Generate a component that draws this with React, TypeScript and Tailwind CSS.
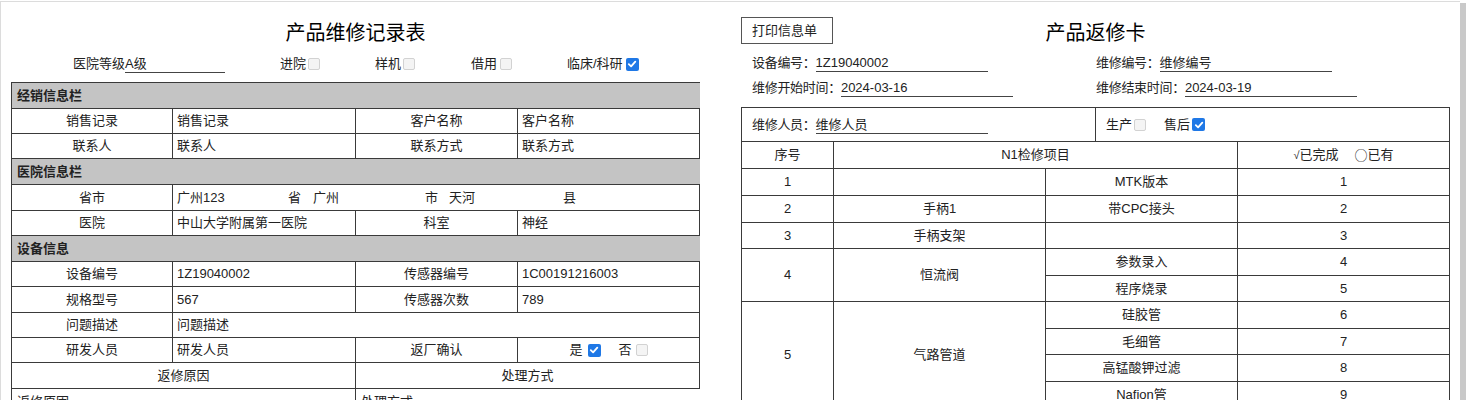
import React from "react";

const B = "border-[#3a3a3a]";

function Cb({ checked }: { checked?: boolean }) {
  if (checked) {
    return (
      <span className="inline-flex w-[13px] h-[13px] rounded-[2px] bg-[#1f78e6] items-center justify-center shrink-0">
        <svg width="10" height="10" viewBox="0 0 10 10">
          <path d="M1.8 5.2 L4.1 7.4 L8.3 2.6" stroke="white" strokeWidth="1.8" fill="none" strokeLinecap="round" strokeLinejoin="round" />
        </svg>
      </span>
    );
  }
  return <span className="inline-block w-[12px] h-[12px] rounded-[2px] border border-[#d2d2d2] bg-[#f4f4f4] shrink-0" />;
}

function Cell({ w, children, center, last, bold }: { w: string; children?: React.ReactNode; center?: boolean; last?: boolean; bold?: boolean }) {
  return (
    <div
      className={`${w} h-full flex items-center ${last ? "" : `border-r ${B}`} ${center ? "justify-center" : "pl-[4px]"} ${bold ? "font-bold" : ""}`}
    >
      {children}
    </div>
  );
}

function LRow({ h, children, gray }: { h: string; children: React.ReactNode; gray?: boolean }) {
  return <div className={`flex ${h} border-b ${B} ${gray ? "bg-[#c4c4c4]" : ""}`}>{children}</div>;
}

function Section({ h, title }: { h: string; title: string }) {
  return (
    <LRow h={h} gray>
      <div className="pl-[5px] flex items-center font-bold">{title}</div>
    </LRow>
  );
}

function LeftPanel() {
  return (
    <div className="w-[689px] shrink-0">
      <div className="h-[44px] pt-[18px] text-center text-[20px] leading-[26px] font-['Liberation_Serif','Noto_Sans_CJK_SC',serif] font-normal text-[#000]">
        产品维修记录表
      </div>
      <div className="h-[36px] flex items-center">
        <div className="ml-[62px] w-[207px] flex items-center">
          <span className="leading-[18px]">医院等级</span>
          <span className={`w-[100px] leading-[17px] border-b border-[#444]`}>A级</span>
        </div>
        <div className="w-[95px] flex items-center gap-[2px]">
          <span>进院</span>
          <Cb />
        </div>
        <div className="w-[96px] flex items-center gap-[2px]">
          <span>样机</span>
          <Cb />
        </div>
        <div className="w-[96px] flex items-center gap-[3px]">
          <span>借用</span>
          <Cb />
        </div>
        <div className="flex items-center gap-[3px]">
          <span>临床/科研</span>
          <Cb checked />
        </div>
      </div>
      <div className={`border-l border-t ${B} w-[689px]`}>
        <Section h="h-[26px]" title="经销信息栏" />
        <LRow h="h-[25px]">
          <Cell w="w-[161px]" center>销售记录</Cell>
          <Cell w="w-[183px]">销售记录</Cell>
          <Cell w="w-[162px]" center>客户名称</Cell>
          <Cell w="w-[182px]">客户名称</Cell>
        </LRow>
        <LRow h="h-[25px]">
          <Cell w="w-[161px]" center>联系人</Cell>
          <Cell w="w-[183px]">联系人</Cell>
          <Cell w="w-[162px]" center>联系方式</Cell>
          <Cell w="w-[182px]">联系方式</Cell>
        </LRow>
        <Section h="h-[26px]" title="医院信息栏" />
        <LRow h="h-[26px]">
          <Cell w="w-[161px]" center>省市</Cell>
          <Cell w="w-[527px]">
            <span className="w-[111px]">广州123</span>
            <span className="w-[25px]">省</span>
            <span className="w-[112px]">广州</span>
            <span className="w-[24px]">市</span>
            <span className="w-[114px]">天河</span>
            <span>县</span>
          </Cell>
        </LRow>
        <LRow h="h-[25px]">
          <Cell w="w-[161px]" center>医院</Cell>
          <Cell w="w-[183px]">中山大学附属第一医院</Cell>
          <Cell w="w-[162px]" center>科室</Cell>
          <Cell w="w-[182px]">神经</Cell>
        </LRow>
        <Section h="h-[26px]" title="设备信息" />
        <LRow h="h-[25px]">
          <Cell w="w-[161px]" center>设备编号</Cell>
          <Cell w="w-[183px]">1Z19040002</Cell>
          <Cell w="w-[162px]" center>传感器编号</Cell>
          <Cell w="w-[182px]">1C00191216003</Cell>
        </LRow>
        <LRow h="h-[26px]">
          <Cell w="w-[161px]" center>规格型号</Cell>
          <Cell w="w-[183px]">567</Cell>
          <Cell w="w-[162px]" center>传感器次数</Cell>
          <Cell w="w-[182px]">789</Cell>
        </LRow>
        <LRow h="h-[25px]">
          <Cell w="w-[161px]" center>问题描述</Cell>
          <Cell w="w-[527px]">问题描述</Cell>
        </LRow>
        <LRow h="h-[25px]">
          <Cell w="w-[161px]" center>研发人员</Cell>
          <Cell w="w-[183px]">研发人员</Cell>
          <Cell w="w-[162px]" center>返厂确认</Cell>
          <Cell w="w-[182px]" center>
            <span className="flex items-center gap-[5px]">
              <span>是</span>
              <Cb checked />
            </span>
            <span className="flex items-center gap-[4px] ml-[18px]">
              <span>否</span>
              <Cb />
            </span>
          </Cell>
        </LRow>
        <LRow h="h-[26px]">
          <Cell w="w-[344px]" center>返修原因</Cell>
          <Cell w="w-[344px]" center>处理方式</Cell>
        </LRow>
        <LRow h="h-[26px]">
          <div className={`w-[344px] h-full flex items-center pl-[5px] border-r ${B}`}>返修原因</div>
          <div className="w-[344px] h-full flex items-center pl-[5px]">处理方式</div>
        </LRow>
      </div>
    </div>
  );
}

function UField({ label, value, w }: { label: string; value: string; w: string }) {
  return (
    <div className="flex items-center">
      <span className="leading-[18px] tracking-[-0.3px]">{label}</span>
      <span className={`${w} leading-[17px] border-b border-[#444]`}>{value}</span>
    </div>
  );
}

function RRow({ h, children, last }: { h: string; children: React.ReactNode; last?: boolean }) {
  return <div className={`flex ${h} ${last ? "" : `border-b ${B}`}`}>{children}</div>;
}

function C({ w, children, last }: { w: string; children?: React.ReactNode; last?: boolean }) {
  return <div className={`${w} h-full flex items-center justify-center ${last ? "" : `border-r ${B}`}`}>{children}</div>;
}

function RightPanel() {
  return (
    <div className="w-[709px] shrink-0">
      <div className="grid grid-cols-[1fr_auto_1fr] h-[44px]">
        <div className="pt-[15px]">
          <div className="w-[92px] h-[27px] border border-[#555] flex items-center pl-[10px]">打印信息单</div>
        </div>
        <div className="pt-[18px] text-[20px] leading-[26px] font-['Liberation_Serif','Noto_Sans_CJK_SC',serif] font-normal text-[#000]">
          产品返修卡
        </div>
        <div />
      </div>
      <div className="pl-[11px]">
        <div className="flex h-[20px] mt-[7px] items-center">
          <div className="w-[344px]">
            <UField label="设备编号：" value="1Z19040002" w="w-[172px]" />
          </div>
          <UField label="维修编号：" value="维修编号" w="w-[172px]" />
        </div>
        <div className="flex h-[20px] mt-[5px] items-center">
          <div className="w-[344px]">
            <UField label="维修开始时间：" value="2024-03-16" w="w-[172px]" />
          </div>
          <UField label="维修结束时间：" value="2024-03-19" w="w-[172px]" />
        </div>
      </div>
      <div className={`mt-[9px] border-l border-t border-r ${B} w-[709px]`}>
        <RRow h="h-[34px]">
          <div className={`w-[354px] h-full flex items-center pl-[10px] border-r ${B}`}>
            <UField label="维修人员：" value="维修人员" w="w-[172px]" />
          </div>
          <div className="flex-1 h-full flex items-center pl-[10px]">
            <span>生产</span>
            <span className="ml-[2px] flex"><Cb /></span>
            <span className="ml-[18px]">售后</span>
            <span className="ml-[2px] flex"><Cb checked /></span>
          </div>
        </RRow>
        <RRow h="h-[27px]">
          <C w="w-[92px]">序号</C>
          <C w="w-[404px]">N1检修项目</C>
          <C w="flex-1" last>
            <span className="text-[11px]">√</span>
            <span>已完成</span>
            <span className="ml-[16px] font-['Noto_Sans_CJK_SC',sans-serif]">○</span>
            <span>已有</span>
          </C>
        </RRow>
        <RRow h="h-[27px]">
          <C w="w-[92px]">1</C>
          <C w="w-[212px]"></C>
          <C w="w-[192px]">MTK版本</C>
          <C w="flex-1" last>1</C>
        </RRow>
        <RRow h="h-[27px]">
          <C w="w-[92px]">2</C>
          <C w="w-[212px]">手柄1</C>
          <C w="w-[192px]">带CPC接头</C>
          <C w="flex-1" last>2</C>
        </RRow>
        <RRow h="h-[26px]">
          <C w="w-[92px]">3</C>
          <C w="w-[212px]">手柄支架</C>
          <C w="w-[192px]"></C>
          <C w="flex-1" last>3</C>
        </RRow>
        <div className={`flex border-b ${B}`}>
          <div className={`w-[92px] flex items-center justify-center border-r ${B}`}>4</div>
          <div className={`w-[212px] flex items-center justify-center border-r ${B}`}>恒流阀</div>
          <div className="flex-1 flex flex-col">
            <RRow h="h-[27px]">
              <C w="w-[192px]">参数录入</C>
              <C w="flex-1" last>4</C>
            </RRow>
            <RRow h="h-[25px]" last>
              <C w="w-[192px]">程序烧录</C>
              <C w="flex-1" last>5</C>
            </RRow>
          </div>
        </div>
        <div className={`flex border-b ${B}`}>
          <div className={`w-[92px] flex items-center justify-center border-r ${B}`}>5</div>
          <div className={`w-[212px] flex items-center justify-center border-r ${B}`}>气路管道</div>
          <div className="flex-1 flex flex-col">
            <RRow h="h-[27px]">
              <C w="w-[192px]">硅胶管</C>
              <C w="flex-1" last>6</C>
            </RRow>
            <RRow h="h-[26px]">
              <C w="w-[192px]">毛细管</C>
              <C w="flex-1" last>7</C>
            </RRow>
            <RRow h="h-[27px]">
              <C w="w-[192px]">高锰酸钾过滤</C>
              <C w="flex-1" last>8</C>
            </RRow>
            <RRow h="h-[26px]" last>
              <C w="w-[192px]">Nafion管</C>
              <C w="flex-1" last>9</C>
            </RRow>
          </div>
        </div>
      </div>
    </div>
  );
}

export default function App() {
  return (
    <div className="w-[1466px] h-[400px] overflow-hidden bg-white text-[13px] text-[#222] font-['Liberation_Sans','Noto_Sans_CJK_SC',sans-serif]">
      <div className="flex h-full pt-[1px]">
        <div className="flex-1 flex border-t border-l border-[#dcdcdc] h-[420px]">
          <div className="pl-[10px] flex">
            <LeftPanel />
            <div className="w-[41px] shrink-0" />
            <RightPanel />
          </div>
        </div>
        <div className="w-[6px] mt-[2px] bg-[#c9c9c9] shrink-0" />
      </div>
    </div>
  );
}
